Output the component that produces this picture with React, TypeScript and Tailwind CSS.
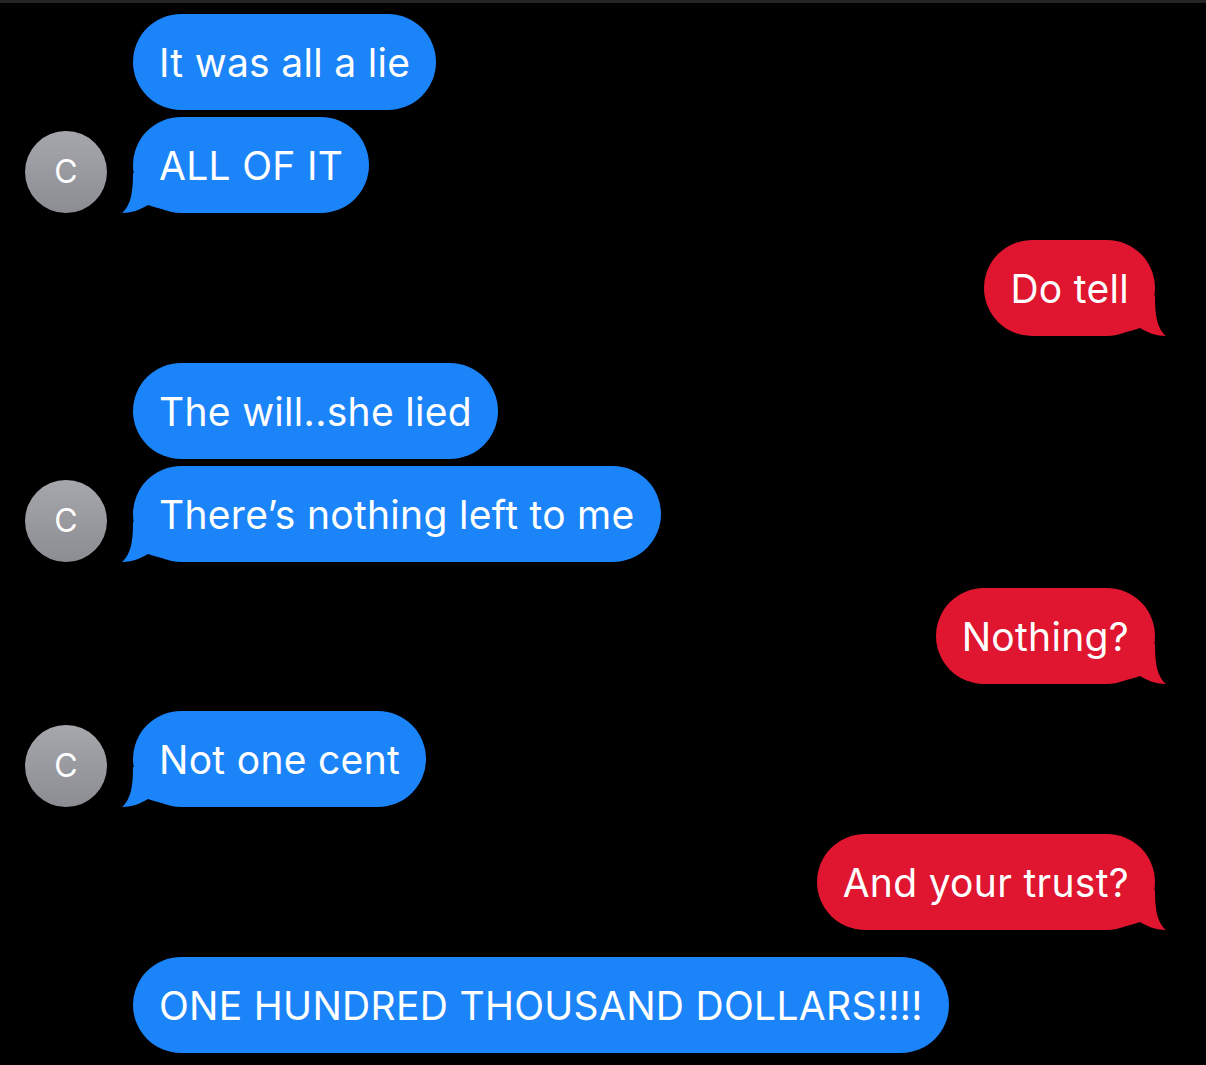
import React from "react";

type Msg = {
  text: string;
  from: "them" | "me";
  tail?: boolean;
  avatar?: boolean;
  gapAfter: number;
};

const MESSAGES: Msg[] = [
  { text: "It was all a lie", from: "them", gapAfter: 7 },
  { text: "ALL OF IT", from: "them", tail: true, avatar: true, gapAfter: 27 },
  { text: "Do tell", from: "me", tail: true, gapAfter: 27 },
  { text: "The will..she lied", from: "them", gapAfter: 7 },
  { text: "There\u2019s nothing left to me", from: "them", tail: true, avatar: true, gapAfter: 26 },
  { text: "Nothing?", from: "me", tail: true, gapAfter: 27 },
  { text: "Not one cent", from: "them", tail: true, avatar: true, gapAfter: 27 },
  { text: "And your trust?", from: "me", tail: true, gapAfter: 27 },
  { text: "ONE HUNDRED THOUSAND DOLLARS!!!!", from: "them", gapAfter: 0 },
];

function Tail({ side }: { side: "left" | "right" }) {
  if (side === "left") {
    return (
      <svg
        className="absolute bottom-0 left-[-11px] pointer-events-none"
        width="44"
        height="40"
        viewBox="0 0 44 40"
      >
        <path
          d="M11 0 C11 22 8 33 0 40 C9 40 18 37 26 32 C30 33 34 35 40 36 L40 0 Z"
          fill="#1b84f9"
        />
      </svg>
    );
  }
  return (
    <svg
      className="absolute bottom-0 right-[-11px] pointer-events-none"
      width="44"
      height="40"
      viewBox="0 0 44 40"
    >
      <path
        d="M33 0 C33 22 36 33 44 40 C35 40 26 37 18 32 C14 33 10 35 4 36 L4 0 Z"
        fill="#e0152f"
      />
    </svg>
  );
}

function Bubble({ msg }: { msg: Msg }) {
  const mine = msg.from === "me";
  return (
    <div
      className={`relative h-[96px] flex items-center px-[26px] rounded-[48px] text-white text-[39px] leading-none tracking-[0.3px] whitespace-nowrap ${
        mine ? "bg-[#e0152f]" : "bg-[#1b84f9]"
      }`}
    >
      {msg.tail && <Tail side={mine ? "right" : "left"} />}
      <span className="relative">{msg.text}</span>
    </div>
  );
}

function Avatar() {
  return (
    <div className="w-[82px] h-[82px] rounded-full bg-gradient-to-b from-[#a5a7ad] to-[#8b8d93] flex items-center justify-center text-white text-[32px]">
      C
    </div>
  );
}

export default function App() {
  return (
    <div
      className="w-[1206px] h-[1065px] bg-black overflow-hidden border-t-[3px] border-[#232323]"
      style={{ fontFamily: "Inter, 'Liberation Sans', sans-serif" }}
    >
      <div className="flex flex-col pt-[11px]">
        {MESSAGES.map((m, i) => (
          <div
            key={i}
            className={`flex items-end ${
              m.from === "me" ? "justify-end pr-[51px]" : "pl-[25px] gap-[26px]"
            }`}
            style={{ marginBottom: m.gapAfter }}
          >
            {m.from === "them" && (
              <div className="w-[82px] shrink-0">{m.avatar && <Avatar />}</div>
            )}
            <Bubble msg={m} />
          </div>
        ))}
      </div>
    </div>
  );
}
